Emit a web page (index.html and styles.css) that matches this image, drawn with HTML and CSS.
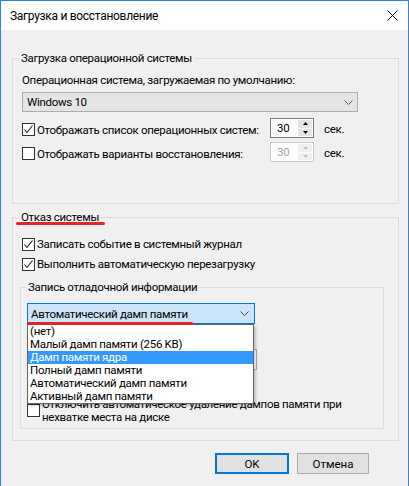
FILE: index.html
```html
<!DOCTYPE html>
<html lang="ru">
<head>
<meta charset="utf-8">
<title>Загрузка и восстановление</title>
<link rel="stylesheet" href="styles.css">
</head>
<body>
<div class="window">
  <div class="titlebar">
    <span class="title">Загрузка и восстановление</span>
    <svg class="close" width="11" height="11" viewBox="0 0 11 11"><path d="M0.5 0.5L10.5 10.5M10.5 0.5L0.5 10.5" stroke="#000" stroke-width="1" fill="none"/></svg>
  </div>
  <div class="content">
    <fieldset class="group g-boot">
      <legend>Загрузка операционной системы</legend>
      <div class="label">Операционная система, загружаемая по умолчанию:</div>
      <div class="combo combo-os">
        <span>Windows 10</span>
        <svg class="chev" width="9" height="5" viewBox="0 0 9 5"><path d="M0.5 0.5L4.5 4.5L8.5 0.5" stroke="#606060" fill="none"/></svg>
      </div>
      <div class="opt-row first">
        <div class="check-label"><span class="cb"><svg width="11" height="11" viewBox="0 0 11 11"><path d="M1.5 5.5L4 8.5L9.5 1.5" stroke="#222" stroke-width="1.1" fill="none"/></svg></span>Отображать список операционных систем:</div>
        <div class="spin">
          <span class="spin-val">30</span>
          <div class="spin-btns">
            <span class="spin-btn"><svg width="5" height="3" viewBox="0 0 5 3"><path d="M2.5 0L5 3H0Z" fill="#000"/></svg></span>
            <span class="spin-btn"><svg width="5" height="3" viewBox="0 0 5 3"><path d="M0 0H5L2.5 3Z" fill="#000"/></svg></span>
          </div>
        </div>
        <span class="unit">сек.</span>
      </div>
      <div class="opt-row second">
        <div class="check-label"><span class="cb"></span>Отображать варианты восстановления:</div>
        <div class="spin disabled">
          <span class="spin-val">30</span>
          <div class="spin-btns">
            <span class="spin-btn"><svg width="5" height="3" viewBox="0 0 5 3"><path d="M2.5 0L5 3H0Z" fill="#bfbfbf"/></svg></span>
            <span class="spin-btn"><svg width="5" height="3" viewBox="0 0 5 3"><path d="M0 0H5L2.5 3Z" fill="#bfbfbf"/></svg></span>
          </div>
        </div>
        <span class="unit">сек.</span>
      </div>
    </fieldset>

    <fieldset class="group g-fail">
      <legend class="marked">Отказ системы<span class="red-mark mark-legend"></span></legend>
      <div class="check-row first"><span class="cb"><svg width="11" height="11" viewBox="0 0 11 11"><path d="M1.5 5.5L4 8.5L9.5 1.5" stroke="#222" stroke-width="1.1" fill="none"/></svg></span>Записать событие в системный журнал</div>
      <div class="check-row"><span class="cb"><svg width="11" height="11" viewBox="0 0 11 11"><path d="M1.5 5.5L4 8.5L9.5 1.5" stroke="#222" stroke-width="1.1" fill="none"/></svg></span>Выполнить автоматическую перезагрузку</div>

      <fieldset class="group g-debug">
        <legend>Запись отладочной информации</legend>
        <div class="combo-wrap">
          <div class="combo combo-open">
            <span>Автоматический дамп памяти</span>
            <svg class="chev" width="9" height="5" viewBox="0 0 9 5"><path d="M0.5 0.5L4.5 4.5L8.5 0.5" stroke="#444" fill="none"/></svg>
          </div>
          <span class="red-mark mark-combo"></span>
          <ul class="dropdown">
            <li>(нет)</li>
            <li>Малый дамп памяти (256 KB)</li>
            <li class="sel">Дамп памяти ядра</li>
            <li>Полный дамп памяти</li>
            <li>Автоматический дамп памяти</li>
            <li>Активный дамп памяти</li>
          </ul>
        </div>
        <div class="textbox"></div>
        <div class="check-multi"><span class="cb"></span><span class="multi-text">Отключить автоматическое удаление дампов памяти при<br>нехватке места на диске</span></div>
      </fieldset>
    </fieldset>

    <div class="buttons">
      <button class="btn btn-default">OK</button>
      <button class="btn">Отмена</button>
    </div>
  </div>
</div>
</body>
</html>
```
FILE: styles.css
```css
* { box-sizing: border-box; }
body {
  margin: 0;
  background: #fff;
  font-family: Roboto, "Liberation Sans", sans-serif;
  font-size: 11.5px;
  letter-spacing: -0.3px;
  color: #000;
}
.window {
  width: 409px;
  height: 486px;
  border: 1px solid #2b88d8;
  border-bottom: none;
  display: flex;
  flex-direction: column;
}
.titlebar {
  flex: none;
  height: 29px;
  background: #fff;
  display: flex;
  align-items: center;
  justify-content: space-between;
  padding: 0 10px 0 9px;
}
.title { font-size: 12px; }
.close { display: block; }
.content {
  flex: 1;
  background: #f0f0f0;
  padding: 0 9px 0 11px;
}
.group {
  border: 1px solid #dcdcdc;
  margin: 0;
  padding: 0 9px;
  min-inline-size: 0;
}
legend {
  padding: 0 2px;
  margin-left: -3px;
  line-height: 16px;
}
.g-boot { margin-top: 20px; padding-bottom: 41px; }
.g-fail { margin-top: 5px; padding-bottom: 11px; }
.g-debug { margin: 5px 5px 0 -2px; padding: 0 0 4px 6px; }
.g-debug legend { margin-left: -1px; }

.label { margin-top: 6px; line-height: 16px; }
.combo {
  display: flex;
  align-items: center;
  justify-content: space-between;
}
.chev { display: block; flex: none; }
.combo-os {
  margin-top: 4px;
  width: 336px;
  height: 20px;
  background: #e5e5e5;
  border: 1px solid #adadad;
  padding: 0 4px 0 4px;
}
.opt-row {
  display: grid;
  grid-template-columns: 248px 44px auto;
  align-items: center;
  height: 20px;
}
.opt-row.first { margin-top: 6px; }
.opt-row.second { margin-top: 4px; }
.check-label {
  display: flex;
  align-items: center;
  padding-top: 3px;
  line-height: 16px;
  white-space: nowrap;
}
.cb {
  flex: none;
  width: 13px;
  height: 13px;
  border: 1px solid #333;
  background: #fff;
  margin-right: 2px;
  display: flex;
  align-items: center;
  justify-content: center;
}
.cb svg { display: block; }
.spin {
  width: 44px;
  height: 20px;
  border: 1px solid #7a7a7a;
  background: #fff;
  display: flex;
}
.spin-val { flex: 1; padding-left: 6px; line-height: 18px; }
.spin-btns {
  width: 16px;
  display: flex;
  flex-direction: column;
  gap: 1px;
  padding: 1px;
}
.spin-btn {
  flex: 1;
  background: #e5e5e5;
  display: flex;
  align-items: center;
  justify-content: center;
}
.spin-btn svg { display: block; }
.spin.disabled { border-color: #cccccc; }
.spin.disabled .spin-val { color: #a0a0a0; }
.spin.disabled .spin-btn { background: #f0f0f0; }
.unit { margin-left: 10px; padding-top: 2px; }

.check-row {
  display: flex;
  align-items: center;
  height: 20px;
  white-space: nowrap;
}
.check-row.first { margin-top: 9px; }

legend.marked { position: relative; }
.red-mark {
  position: absolute;
  height: 3px;
  background: #e3242b;
  border-radius: 2px;
  z-index: 3;
}
.mark-legend { left: -3px; top: 13px; width: 89px; }
.mark-combo { left: 0; top: 19px; width: 166px; }

.combo-wrap { position: relative; margin-top: 8px; width: 228px; }
.combo-open {
  height: 21px;
  background: #cce4f7;
  border: 1px solid #0078d7;
  padding: 0 5px 0 3px;
}
.dropdown {
  position: absolute;
  top: 21px;
  left: 0;
  width: 227px;
  margin: 0;
  padding: 0;
  list-style: none;
  background: #fff;
  border: 1px solid #646464;
  box-shadow: 2px 2px 3px rgba(0, 0, 0, 0.2);
  z-index: 2;
}
.dropdown li {
  height: 13px;
  line-height: 13px;
  padding-left: 2px;
  white-space: nowrap;
}
.dropdown li.sel { background: #3399ff; color: #fff; }
.textbox {
  margin-top: 25px;
  width: 230px;
  height: 21px;
  border: 1px solid #adadad;
  background: #fff;
}
.check-multi {
  margin-top: 28px;
  display: flex;
  align-items: flex-start;
  line-height: 13px;
  white-space: nowrap;
}
.check-multi .cb { margin-top: 6px; }

.buttons {
  display: flex;
  justify-content: flex-end;
  gap: 8px;
  margin: 12px 30px 0 0;
}
.btn {
  height: 21px;
  width: 72px;
  padding: 0;
  font: inherit;
  letter-spacing: 0;
  color: #000;
  background: #e1e1e1;
  border: 1px solid #adadad;
}
.btn-default { width: 74px; border: 2px solid #0078d7; }
```
